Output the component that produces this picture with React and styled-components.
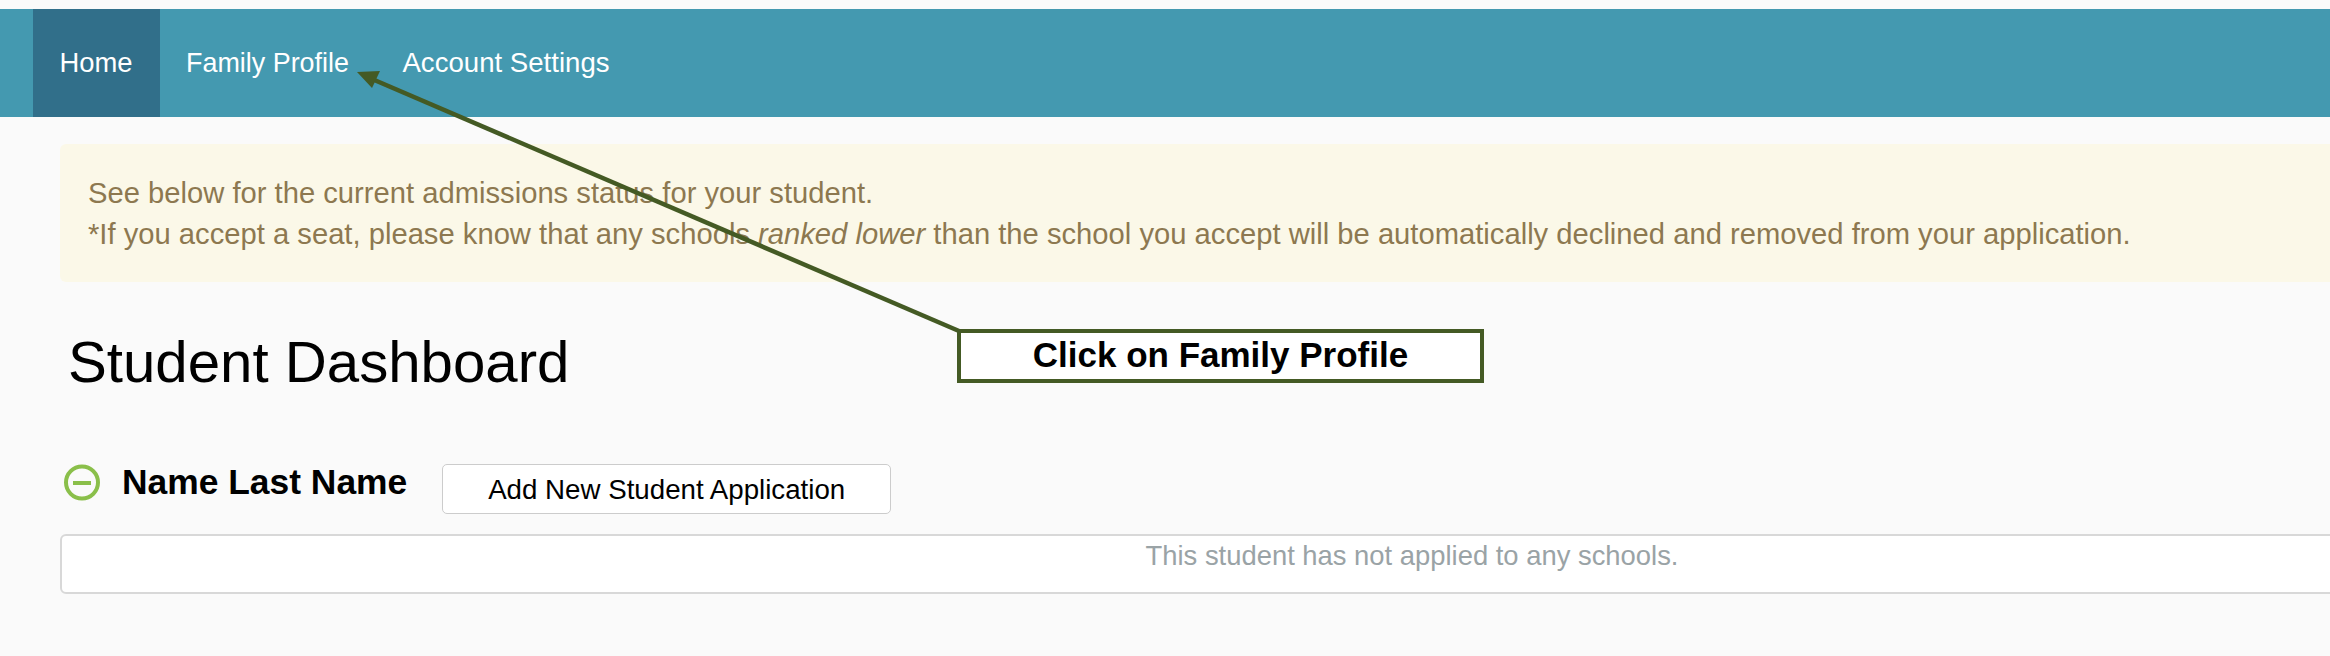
import React from "react";
import styled, { createGlobalStyle } from "styled-components";

const Global = createGlobalStyle`
  html, body { margin: 0; padding: 0; background: #fafafa; }
  body { font-family: "Liberation Sans", Arial, sans-serif; }
`;

const Page = styled.div`
  position: relative;
  width: 2330px;
  height: 656px;
  overflow: hidden;
  padding-top: 9px;
  box-sizing: border-box;
  background: #fafafa;
`;

const Nav = styled.nav`
  display: flex;
  height: 108px;
  padding-left: 33px;
  background: #4499b0;
`;

const NavItem = styled.a`
  display: flex;
  align-items: center;
  padding: 0 27px 0 26.5px;
  font-size: ${(p) => p.$size}px;
  color: #fff;
  background: ${(p) => (p.$active ? "#316f8a" : "transparent")};
`;

const Content = styled.main`
  display: flex;
  flex-direction: column;
  align-items: flex-start;
  padding: 27px 0 0 60px;
`;

const Alert = styled.div`
  box-sizing: border-box;
  width: 2704px;
  height: 138px;
  padding: 29px 28px 0;
  border-radius: 6px;
  background: #fbf8e8;
  color: #8d7850;
  font-size: 29.2px;
  line-height: 41px;
`;

const Title = styled.h1`
  margin: 45px 0 0 8px;
  font-size: 58.2px;
  line-height: 70px;
  font-weight: 400;
  color: #000;
`;

const StudentRow = styled.div`
  display: flex;
  align-items: flex-start;
  margin: 67px 0 0 4px;
`;

const ToggleIcon = styled.svg`
  width: 36px;
  height: 37px;
  flex: none;
`;

const StudentName = styled.h2`
  margin: 0 0 0 22px;
  font-size: 35.4px;
  line-height: 36px;
  font-weight: 700;
  color: #000;
`;

const AddButton = styled.button`
  box-sizing: border-box;
  width: 449px;
  height: 50px;
  margin-left: 35px;
  padding: 2px 0 0;
  border: 1px solid #ccc;
  border-radius: 5px;
  background: #fff;
  color: #000;
  font-family: inherit;
  font-size: 27.7px;
`;

const Panel = styled.div`
  box-sizing: border-box;
  width: 2704px;
  height: 60px;
  margin-top: 20px;
  border: 2px solid #d8d8d8;
  border-radius: 6px;
  background: #fff;
  color: #9aa3a6;
  font-size: 27.4px;
  line-height: 40px;
  text-align: center;
`;

const Callout = styled.div`
  position: absolute;
  left: 957px;
  top: 329px;
  box-sizing: border-box;
  width: 527px;
  height: 54px;
  border: 4px solid #445a24;
  background: #fff;
  color: #000;
  font-size: 35px;
  font-weight: 700;
  line-height: 44px;
  text-align: center;
`;

const ArrowLayer = styled.svg`
  position: absolute;
  left: 0;
  top: 0;
  pointer-events: none;
`;

export default function App() {
  return (
    <Page>
      <Global />
      <Nav>
        <NavItem $active $size={27.4}>Home</NavItem>
        <NavItem $size={26.9}>Family Profile</NavItem>
        <NavItem $size={27.6}>Account Settings</NavItem>
      </Nav>
      <Content>
        <Alert>
          See below for the current admissions status for your student.
          <br />
          *If you accept a seat, please know that any schools <em>ranked lower</em> than the school you accept will be automatically declined and removed from your application.
        </Alert>
        <Title>Student Dashboard</Title>
        <StudentRow>
          <ToggleIcon viewBox="0 0 36 37">
            <circle cx="18" cy="18.5" r="16" fill="none" stroke="#8abf4a" strokeWidth="4" />
            <rect x="9" y="17" width="18" height="4" fill="#8abf4a" />
          </ToggleIcon>
          <StudentName>Name Last Name</StudentName>
          <AddButton>Add New Student Application</AddButton>
        </StudentRow>
        <Panel>This student has not applied to any schools.</Panel>
      </Content>
      <ArrowLayer width="2330" height="656" viewBox="0 0 2330 656">
        <line x1="959" y1="331" x2="372" y2="79" stroke="#445a24" strokeWidth="4.5" />
        <polygon points="357,72 380,71 372,88" fill="#445a24" />
      </ArrowLayer>
      <Callout>Click on Family Profile</Callout>
    </Page>
  );
}
